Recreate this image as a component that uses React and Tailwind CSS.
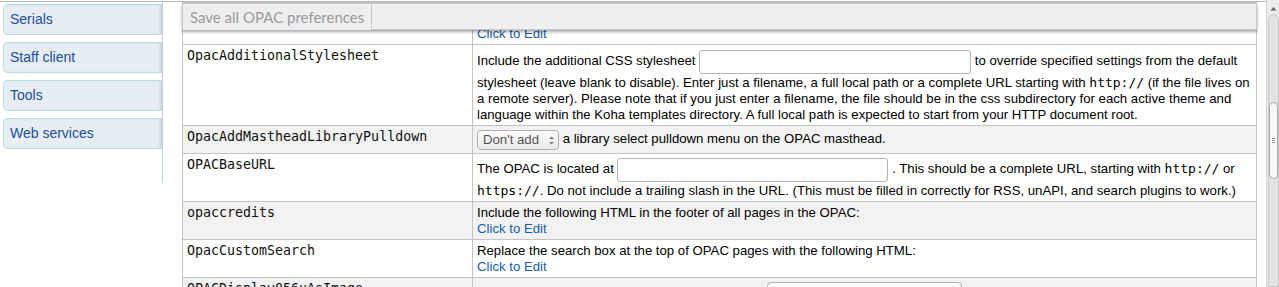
import React from "react";

const navItems = ["Serials", "Staff client", "Tools", "Web services"];

const Code = ({ children }) => (
  <code className="font-['DejaVu_Sans_Mono',monospace] text-[13px]">{children}</code>
);

const TextInput = ({ className }) => (
  <span className={`inline-block align-middle h-6 border border-[#b4b4b4] rounded-[3px] bg-white ${className}`} />
);

const Row = ({ name, gray, children, first }) => (
  <tr className={gray ? "bg-[#f2f2f2]" : "bg-white"}>
    <td className={`border border-[#c4c4c4] align-top px-[4px] ${first ? "pt-[23px]" : "pt-[3px]"} pb-[2px] leading-4 font-['DejaVu_Sans_Mono',monospace] text-[13.3px] text-[#111]`}>
      {name}
    </td>
    <td className={`border border-[#c4c4c4] align-top px-[4px] ${first ? "pt-[23px]" : "pt-[3px]"} pb-[2px] leading-4 text-[13.2px] text-black whitespace-nowrap`}>
      {children}
    </td>
  </tr>
);

const Link = () => <span className="text-[#1a5ca8]">Click to Edit</span>;

export default function App() {
  return (
    <div className="w-[1279px] h-[287px] overflow-hidden bg-white flex font-['Liberation_Sans',Arial,sans-serif]">
      <div className="w-[1266px] shrink-0 mt-px border-t border-[#b8b8b8] flex">
        {/* NAV */}
        <div className="w-[163px] h-[181px] shrink-0 border-r border-[#b6dadd] flex flex-col gap-[7px] pt-[2px]">
          {navItems.map((item) => (
            <div
              key={item}
              className="ml-[3px] h-[31px] flex items-center pl-[6px] border border-r-0 border-[#b9dde0] rounded-l-[5px] bg-[#e6edf3] shadow-[inset_-3px_0_3px_-1px_rgba(0,0,0,0.12)] text-[14px] text-[#1d4f9b]"
            >
              {item}
            </div>
          ))}
        </div>

        {/* MAIN */}
        <div className="relative flex-1 pl-[19px]">
          <table className="w-[1075px] table-fixed border-collapse">
            <colgroup>
              <col className="w-[290px]" />
              <col />
            </colgroup>
            <tbody>
              <Row name="" first>
                <Link />
              </Row>
              <Row name="OpacAdditionalStylesheet">
                Include the additional CSS stylesheet <TextInput className="w-[272px] my-[1.5px]" /> to override specified settings from the default
                <br />
                stylesheet (leave blank to disable). Enter just a filename, a full local path or a complete URL starting with <Code>http://</Code> (if the file lives on
                <br />
                a remote server). Please note that if you just enter a filename, the file should be in the css subdirectory for each active theme and
                <br />
                language within the Koha templates directory. A full local path is expected to start from your HTTP document root.
              </Row>
              <Row name="OpacAddMastheadLibraryPulldown" gray>
                <span className="inline-flex align-middle items-center h-5 w-[82px] my-px pl-[5px] pr-[3px] justify-between border border-[#b0b0b0] rounded-[4px] bg-gradient-to-b from-[#fcfcfc] to-[#e9e9e9] text-[#555]">
                  Don't add
                  <svg width="7" height="11" viewBox="0 0 7 11">
                    <path d="M1 4 L3.5 1.5 L6 4 Z" fill="#777" />
                    <path d="M1 7 L3.5 9.5 L6 7 Z" fill="#777" />
                  </svg>
                </span>{" "}
                a library select pulldown menu on the OPAC masthead.
              </Row>
              <Row name="OPACBaseURL">
                The OPAC is located at <TextInput className="w-[271px] my-px" /> . This should be a complete URL, starting with <Code>http://</Code> or
                <br />
                <Code>https://</Code>. Do not include a trailing slash in the URL. (This must be filled in correctly for RSS, unAPI, and search plugins to work.)
              </Row>
              <Row name="opaccredits" gray>
                Include the following HTML in the footer of all pages in the OPAC:
                <br />
                <Link />
              </Row>
              <Row name="OpacCustomSearch">
                Replace the search box at the top of OPAC pages with the following HTML:
                <br />
                <Link />
              </Row>
              <Row name="OPACDisplay856uAsImage" gray>
                Display the URI in the 856u field as an image on:{" "}
                <span className="inline-block align-middle h-[24px] w-[195px] my-px border border-[#b0b0b0] rounded-[4px] bg-gradient-to-b from-[#fcfcfc] to-[#e9e9e9] text-[#555] pl-[5px] leading-[22px]">
                  Neither details or results page
                </span>
              </Row>
            </tbody>
          </table>

          {/* floating toolbar */}
          <div className="absolute top-px left-[19px] w-[1075px] h-[27px] bg-[#efefef] border border-[#c8c8c8] shadow-[0_2px_3px_rgba(0,0,0,0.35)] flex">
            <button className="h-[26px] px-[7px] border-r border-[#c8c8c8] bg-[#eeeeee] text-[15px] text-[#9a9a9a] font-['Lato',sans-serif]">
              Save all OPAC preferences
            </button>
          </div>
        </div>
      </div>

      {/* SCROLLBAR */}
      <div className="w-[13px] shrink-0 flex flex-col bg-[#ededed] border-l border-[#d4d4d4]">
        <div className="h-[14px] pt-[2px] flex items-center justify-center">
          <svg width="7" height="5" viewBox="0 0 7 5">
            <path d="M0.5 4.5 L3.5 1 L6.5 4.5 Z" fill="#666" />
          </svg>
        </div>
        <div className="flex-1 ml-px rounded-t-[6px] border border-[#c6c6c6] bg-[#e2e2e2] flex flex-col">
          <div className="mt-[87px] h-[77px] rounded-[6px] border border-[#a9a9a9] bg-[#f7f7f7] flex flex-col items-center justify-center gap-px">
            <span className="w-[3px] h-px bg-[#999]" />
            <span className="w-[3px] h-px bg-[#999]" />
            <span className="w-[3px] h-px bg-[#999]" />
          </div>
        </div>
      </div>
    </div>
  );
}
